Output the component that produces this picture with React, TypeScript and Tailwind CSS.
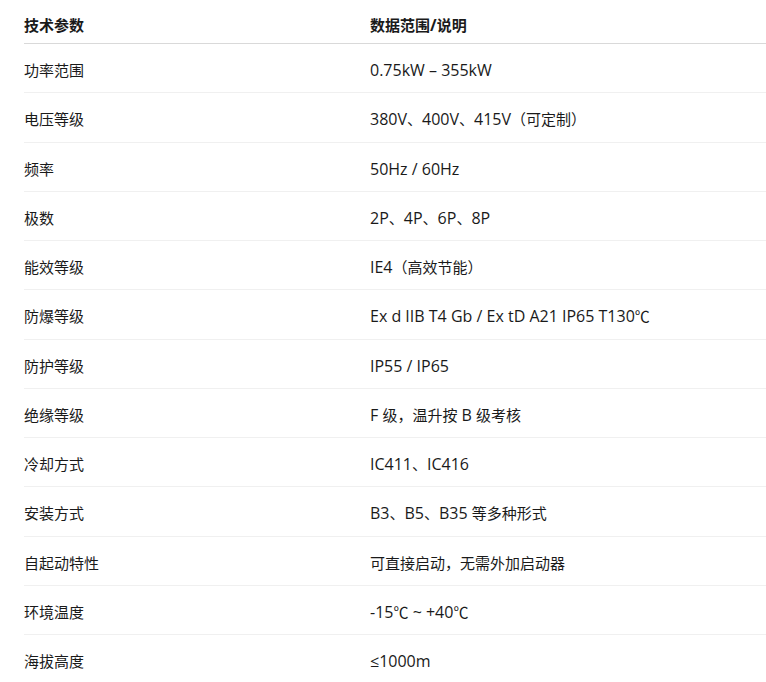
import React from "react";

const rows: [string, string][] = [
  ["功率范围", "0.75kW – 355kW"],
  ["电压等级", "380V、400V、415V（可定制）"],
  ["频率", "50Hz / 60Hz"],
  ["极数", "2P、4P、6P、8P"],
  ["能效等级", "IE4（高效节能）"],
  ["防爆等级", "Ex d IIB T4 Gb / Ex tD A21 IP65 T130℃"],
  ["防护等级", "IP55 / IP65"],
  ["绝缘等级", "F 级，温升按 B 级考核"],
  ["冷却方式", "IC411、IC416"],
  ["安装方式", "B3、B5、B35 等多种形式"],
  ["自起动特性", "可直接启动，无需外加启动器"],
  ["环境温度", "-15℃ ~ +40℃"],
  ["海拔高度", "≤1000m"],
];

const cjk = /([\u2100-\u214f\u3000-\u9fff\uff00-\uffef]+)/;

function Mixed({ text }: { text: string }) {
  const parts = text.split(cjk).filter((p) => p.length > 0);
  return (
    <>
      {parts.map((p, i) =>
        cjk.test(p) ? (
          <span key={i}>{p}</span>
        ) : (
          <span key={i} className="text-[16px]">
            {p}
          </span>
        )
      )}
    </>
  );
}

export default function App() {
  return (
    <div
      className="bg-white text-[#1a1a1a] pl-[24px] text-[15px] leading-[20px]"
      style={{ fontFamily: '"Open Sans", "Noto Sans CJK SC", sans-serif' }}
    >
      <div className="flex border-b border-[#d9d9d9] pt-[15px] pb-[8px] font-bold">
        <div className="w-[346px]">技术参数</div>
        <div className="flex-1">
          <Mixed text="数据范围/说明" />
        </div>
      </div>
      {rows.map(([a, b]) => (
        <div key={a} className="flex border-b border-[#f0f0f0] pt-[16px] pb-[12.25px]">
          <div className="w-[346px]">{a}</div>
          <div className="flex-1">
            <Mixed text={b} />
          </div>
        </div>
      ))}
    </div>
  );
}
